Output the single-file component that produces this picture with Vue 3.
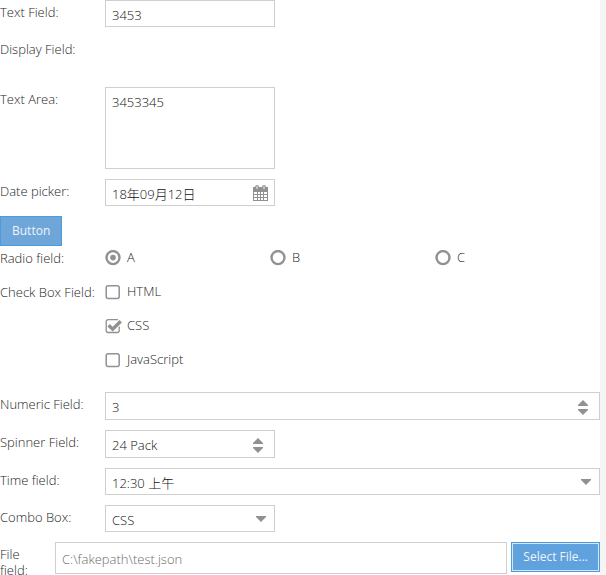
<script setup>
import { ref } from 'vue'

const text = ref('3453')
const notes = ref('3453345')
const date = ref('18年09月12日')
const radio = ref('A')
const radios = ['A', 'B', 'C']
const checks = ref(['CSS'])
const languages = ['HTML', 'CSS', 'JavaScript']
const amount = ref(3)
const pack = ref(24)
const time = ref('12:30 上午')
const times = ['12:00 上午', '12:30 上午', '1:00 上午']
const combo = ref('CSS')
const file = ref('C:\\fakepath\\test.json')
</script>

<template>
  <form class="form" @submit.prevent>
    <div class="row">
      <label class="label" for="text">Text Field:</label>
      <div class="box short"><input id="text" v-model="text" class="value" type="text" /></div>
    </div>

    <div class="row display">
      <span class="label">Display Field:</span>
    </div>

    <div class="row">
      <label class="label" for="notes">Text Area:</label>
      <div class="box short area"><textarea id="notes" v-model="notes" class="value"></textarea></div>
    </div>

    <div class="row">
      <label class="label" for="date">Date picker:</label>
      <div class="box short">
        <input id="date" v-model="date" class="value" type="text" />
        <button class="trigger" type="button" aria-label="Open calendar">
          <svg width="15" height="16" viewBox="0 0 15 16">
            <path fill="#919191" fill-rule="evenodd" d="M0 2h15v14H0zM1 7v2h3V7zM5 7v2h2V7zM8 7v2h2V7zM11 7v2h3V7zM1 10v2h3v-2zM5 10v2h2v-2zM8 10v2h2v-2zM11 10v2h3v-2zM1 13v2h3v-2zM5 13v2h2v-2zM8 13v2h2v-2zM11 13v2h3v-2z" />
            <rect x="2.5" y="0.5" width="3" height="4" rx="1.2" fill="#c4c4c4" stroke="#919191" />
            <rect x="9.5" y="0.5" width="3" height="4" rx="1.2" fill="#c4c4c4" stroke="#919191" />
          </svg>
        </button>
      </div>
    </div>

    <button class="button" type="button">Button</button>

    <div class="row choices" role="radiogroup" aria-labelledby="radio-label">
      <span id="radio-label" class="label">Radio field:</span>
      <div class="radios">
        <label v-for="r in radios" :key="r" class="choice">
          <input v-model="radio" class="native" type="radio" name="radio" :value="r" />
          <svg class="mark" width="16" height="16" viewBox="0 0 16 16">
            <circle cx="8" cy="7.6" r="6.5" fill="none" stroke="#919191" stroke-width="2.4" />
            <circle v-if="radio === r" cx="8" cy="7.6" r="2.8" fill="#919191" />
          </svg>
          <span class="caption">{{ r }}</span>
        </label>
      </div>
    </div>

    <div class="row checkgroup" role="group" aria-labelledby="check-label">
      <span id="check-label" class="label">Check Box Field:</span>
      <div class="checks">
        <label v-for="l in languages" :key="l" class="choice">
          <input v-model="checks" class="native" type="checkbox" :value="l" />
          <svg class="mark" width="17" height="16" viewBox="0 0 17 16">
            <template v-if="checks.includes(l)">
              <path d="M13 1.7H3.2A2 2 0 0 0 1.2 3.7V12.5A2 2 0 0 0 3.2 14.5H12.2A2 2 0 0 0 14.2 12.5V8.5" fill="none" stroke="#919191" stroke-width="1.3" />
              <path d="M3.6 7.2L7.7 11.2L15.7 3.2" fill="none" stroke="#919191" stroke-width="3.4" />
            </template>
            <rect v-else x="1.2" y="1.7" width="13" height="12.8" rx="2" fill="none" stroke="#919191" stroke-width="1.5" />
          </svg>
          <span class="caption">{{ l }}</span>
        </label>
      </div>
    </div>

    <div class="row">
      <label class="label" for="amount">Numeric Field:</label>
      <div class="box tall">
        <input id="amount" v-model="amount" class="value" type="number" />
        <div class="spin">
          <button type="button" aria-label="Increase amount" @click="amount++">
            <svg width="10" height="6" viewBox="0 0 10 6"><path d="M0 6V5L5 0L10 5V6z" fill="#919191" /></svg>
          </button>
          <button type="button" aria-label="Decrease amount" @click="amount--">
            <svg width="10" height="6" viewBox="0 0 10 6"><path d="M0 0V1L5 6L10 1V0z" fill="#919191" /></svg>
          </button>
        </div>
      </div>
    </div>

    <div class="row">
      <label class="label" for="pack">Spinner Field:</label>
      <div class="box short tall">
        <input id="pack" class="value" type="text" :value="pack + ' Pack'" readonly />
        <div class="spin">
          <button type="button" aria-label="Increase packs" @click="pack++">
            <svg width="10" height="6" viewBox="0 0 10 6"><path d="M0 6V5L5 0L10 5V6z" fill="#919191" /></svg>
          </button>
          <button type="button" aria-label="Decrease packs" @click="pack--">
            <svg width="10" height="6" viewBox="0 0 10 6"><path d="M0 0V1L5 6L10 1V0z" fill="#919191" /></svg>
          </button>
        </div>
      </div>
    </div>

    <div class="row">
      <label class="label" for="time">Time field:</label>
      <div class="box">
        <select id="time" v-model="time" class="value">
          <option v-for="t in times" :key="t">{{ t }}</option>
        </select>
        <svg class="arrow" width="10" height="6" viewBox="0 0 10 6"><path d="M0 0V1L5 6L10 1V0z" fill="#919191" /></svg>
      </div>
    </div>

    <div class="row">
      <label class="label" for="combo">Combo Box:</label>
      <div class="box short">
        <select id="combo" v-model="combo" class="value">
          <option v-for="l in languages" :key="l">{{ l }}</option>
        </select>
        <svg class="arrow" width="10" height="6" viewBox="0 0 10 6"><path d="M0 0V1L5 6L10 1V0z" fill="#919191" /></svg>
      </div>
    </div>

    <div class="row">
      <label class="label narrow" for="file">File field:</label>
      <div class="box file"><input id="file" class="value" type="text" :value="file" readonly /></div>
      <button class="button select" type="button">Select File...</button>
    </div>
  </form>
</template>

<style>
body {
  background: #f5f5f5;
  overflow: hidden;
}
</style>

<style scoped>
.form {
  display: flex;
  flex-direction: column;
  gap: 10px;
  box-sizing: border-box;
  min-height: 100vh;
  margin-right: 6px;
  background: #fff;
  color: #262626;
  font: 300 13px/16px "Open Sans", "Noto Sans CJK TC", sans-serif;
}
.row {
  display: flex;
  align-items: flex-start;
}
.display {
  min-height: 40px;
}
.label {
  flex: none;
  box-sizing: border-box;
  width: 105px;
  padding-top: 4px;
  white-space: nowrap;
}
.narrow {
  width: 55px;
  height: 32px;
  padding-right: 20px;
  white-space: normal;
}
.box {
  display: flex;
  flex: 1;
  align-items: center;
  box-sizing: border-box;
  height: 27px;
  min-width: 0;
  border: 1px solid #cfcfcf;
  background: #fff;
}
.short {
  flex: 0 1 170px;
}
.tall {
  height: 28px;
}
.area {
  height: 82px;
}
.file {
  height: 32px;
}
.value {
  flex: 1;
  box-sizing: border-box;
  align-self: stretch;
  min-width: 0;
  margin: 0;
  padding: 2px 6px 0;
  border: 0;
  outline: 0;
  background: transparent;
  color: #111;
  font: inherit;
  appearance: none;
  resize: none;
}
textarea.value {
  padding-top: 6px;
}
.value[type="number"] {
  appearance: textfield;
}
.file .value {
  color: #6a6a6a;
}
.trigger,
.spin button {
  display: flex;
  padding: 0;
  border: 0;
  background: none;
}
.trigger {
  margin-right: 6px;
}
.spin {
  display: flex;
  flex-direction: column;
  gap: 3px;
  margin: 2px 11px 0 0;
}
.arrow {
  margin-right: 8px;
  pointer-events: none;
}
.button {
  align-self: flex-start;
  box-sizing: border-box;
  height: 30px;
  padding: 0 11px;
  border: 1px solid #4b9bdf;
  background: #6ea6d9;
  color: #f0f4f8;
  font: 400 12px/16px "Open Sans", sans-serif;
}
.select {
  margin-left: 4px;
  background: #5fa2dd;
  box-shadow: inset 0 0 0 1px #d5e6f5;
}
.choices {
  margin-top: -10px;
}
.checkgroup {
  padding-bottom: 10px;
}
.radios {
  display: flex;
  flex: 1;
}
.radios .choice {
  flex: 1;
}
.checks {
  display: flex;
  flex-direction: column;
  gap: 10px;
}
.choice {
  position: relative;
  display: flex;
  align-items: center;
  gap: 6px;
  height: 24px;
}
.checks .choice {
  gap: 5px;
}
.caption {
  padding-bottom: 2px;
}
.mark {
  flex: none;
}
.native {
  position: absolute;
  left: 0;
  width: 16px;
  height: 16px;
  margin: 0;
  opacity: 0;
}
</style>
